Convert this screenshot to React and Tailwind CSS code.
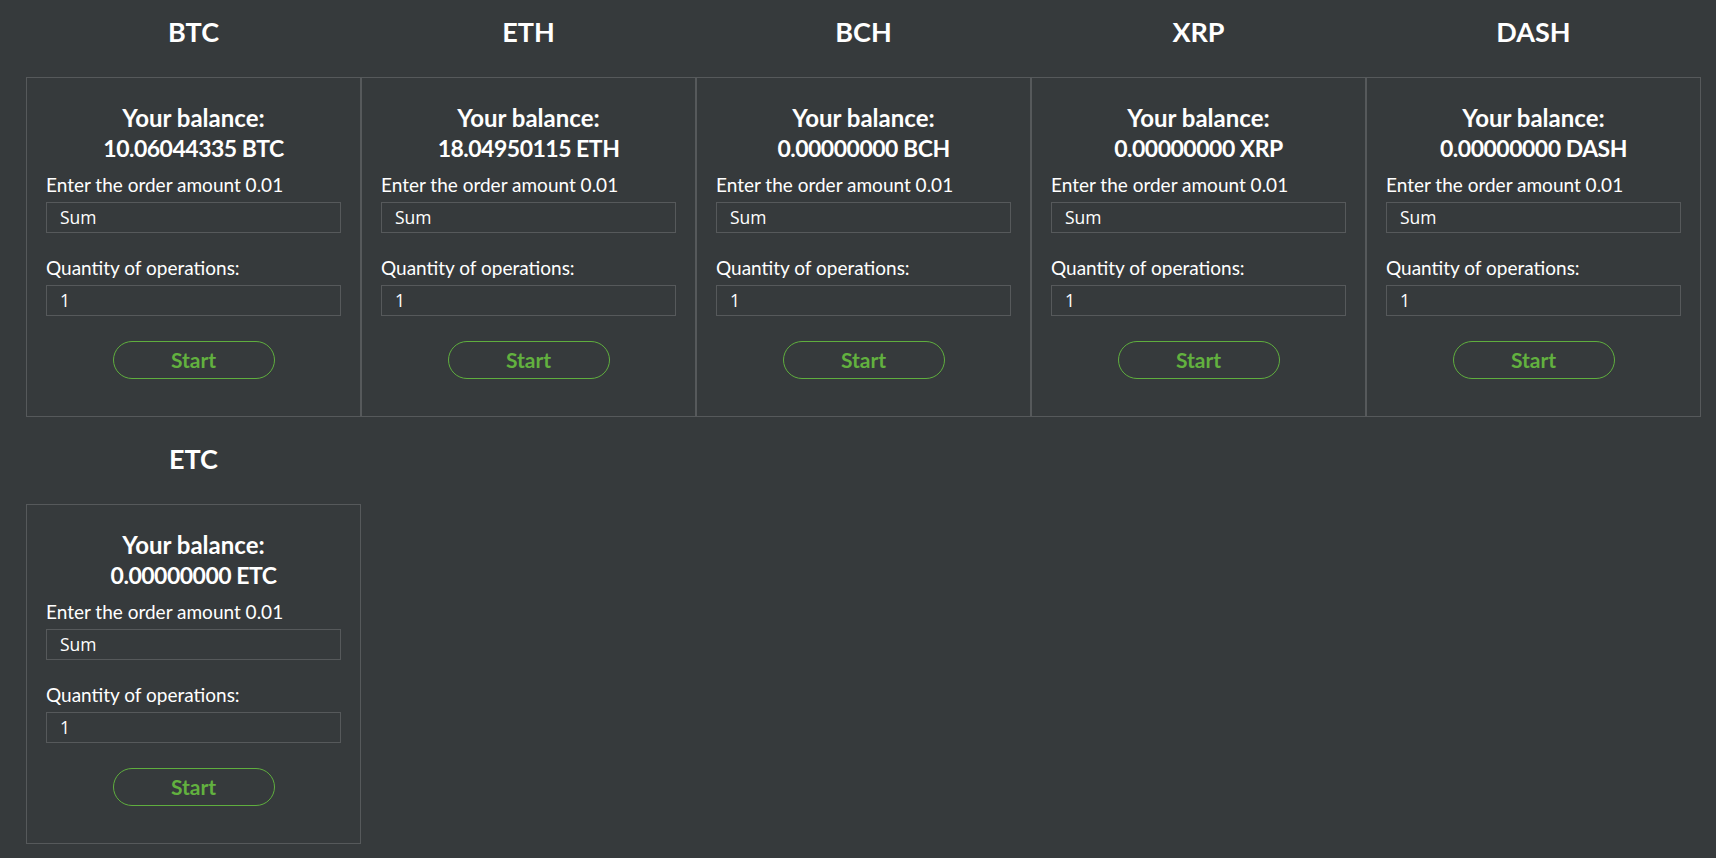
import React from "react";

const coins = [
  { code: "BTC", balance: "10.06044335" },
  { code: "ETH", balance: "18.04950115" },
  { code: "BCH", balance: "0.00000000" },
  { code: "XRP", balance: "0.00000000" },
  { code: "DASH", balance: "0.00000000" },
  { code: "ETC", balance: "0.00000000" },
];

function CoinCard({ coin }) {
  return (
    <div className="flex flex-col">
      <div className="h-[77px] pt-[13px] text-center text-[27px] leading-[38px] font-bold text-white">{coin.code}</div>
      <div className="h-[340px] border border-[#56595b] px-[19px] pt-[25px]">
        <div className="text-center text-[23px] leading-[30px] font-bold text-white">
          <div className="text-[24px]">Your balance:</div>
          <div className="tracking-[-0.5px]">{coin.balance} {coin.code}</div>
        </div>
        <div className="mt-[10px] text-[19px] leading-[24px] text-white">Enter the order amount 0.01</div>
        <div className="mt-[5px] h-[31px] border border-[#56595b] pl-[13px] flex items-center text-[17.5px] text-white font-['Open_Sans',sans-serif]">Sum</div>
        <div className="mt-[23px] text-[19px] leading-[24px] text-white">Quantity of operations:</div>
        <div className="mt-[5px] h-[31px] border border-[#56595b] pl-[13px] flex items-center text-[17.5px] text-white font-['Open_Sans',sans-serif]">1</div>
        <div className="mt-[25px] flex justify-center">
          <button className="w-[162px] h-[38px] rounded-full border border-[#5fae3e] text-[#62b13f] text-[21px] font-bold">Start</button>
        </div>
      </div>
    </div>
  );
}

export default function App() {
  return (
    <div className="min-h-[858px] bg-[#363a3c] pl-[26px] font-['Lato',sans-serif]">
      <div className="grid grid-cols-[repeat(5,335px)] gap-y-[10px]">
        {coins.map((c) => <CoinCard key={c.code} coin={c} />)}
      </div>
    </div>
  );
}
